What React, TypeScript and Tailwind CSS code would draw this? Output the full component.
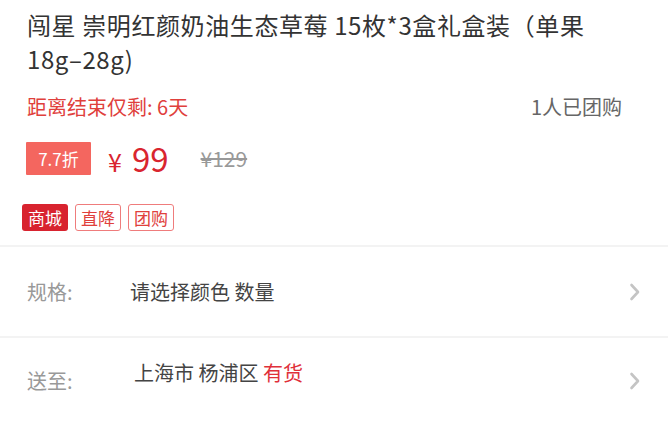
import React from "react";

const Chevron = () => (
  <svg width="12" height="18" viewBox="0 0 12 18" fill="none">
    <path d="M2.5 2 L9 9 L2.5 16" stroke="#c4c4c4" strokeWidth="2.6" strokeLinecap="round" strokeLinejoin="round" />
  </svg>
);

export default function App() {
  return (
    <div
      className="w-[668px] h-[424px] bg-white overflow-hidden"
      style={{ fontFamily: '"Noto Sans CJK SC", "Noto Sans", sans-serif' }}
    >
      <div className="px-[27px] pt-[8px]">
        <div className="text-[24px] leading-[34px] text-[#333333] pr-[50px] tracking-[0.6px]">
          闯星 崇明红颜奶油生态草莓 15枚*3盒礼盒装（单果18g–28g)
        </div>
        <div className="mt-[17px] flex items-center justify-between h-[28px] pr-[19px]">
          <span className="text-[20px] leading-[28px] text-[#e0403c]">距离结束仅剩: 6天</span>
          <span className="text-[20px] leading-[28px] text-[#666666]">1人已团购</span>
        </div>
        <div className="mt-[21px] h-[33px] flex items-center -ml-[1px]">
          <div className="h-[33px] w-[65px] bg-[#f4665f] flex items-center justify-center text-white text-[17px] leading-none rounded-[1px]">
            7.7折
          </div>
          <div className="ml-[17px] flex items-baseline text-[#d9252f] leading-none">
            <span className="text-[25px] leading-none">¥</span>
            <span className="ml-[10px] text-[33px] leading-none">99</span>
          </div>
          <span className="ml-[32px] text-[21px] leading-none text-[#999999] line-through">¥129</span>
        </div>
      </div>
      <div className="mt-[29px] h-[27px] pl-[22px] flex items-center gap-[7px]">
        <span className="h-[27px] px-[6px] bg-[#d8232f] text-white text-[17px] leading-[27px] rounded-[3px]">商城</span>
        <span className="h-[27px] px-[5px] border border-[#ef7c7c] text-[#e0403c] text-[17px] leading-[25px] rounded-[3px]">直降</span>
        <span className="h-[27px] px-[5px] border border-[#ef7c7c] text-[#e0403c] text-[17px] leading-[25px] rounded-[3px]">团购</span>
      </div>
      <div className="mt-[14px] h-[2px] bg-[#f3f3f3]" />
      <div className="h-[89px] flex items-center pl-[27px] pr-[27px]">
        <span className="w-[103px] text-[20px] leading-[28px] text-[#999999]">规格:</span>
        <span className="flex-1 text-[20px] leading-[28px] text-[#444444]">请选择颜色 数量</span>
        <Chevron />
      </div>
      <div className="h-[2px] bg-[#f3f3f3]" />
      <div className="h-[86px] flex items-center pl-[27px] pr-[27px]">
        <span className="w-[107px] text-[20px] leading-[28px] text-[#999999]">送至:</span>
        <span className="flex-1 text-[20px] leading-[28px] text-[#444444] -mt-[16px]">
          上海市 杨浦区 <span className="text-[#e0303a]">有货</span>
        </span>
        <Chevron />
      </div>
    </div>
  );
}
